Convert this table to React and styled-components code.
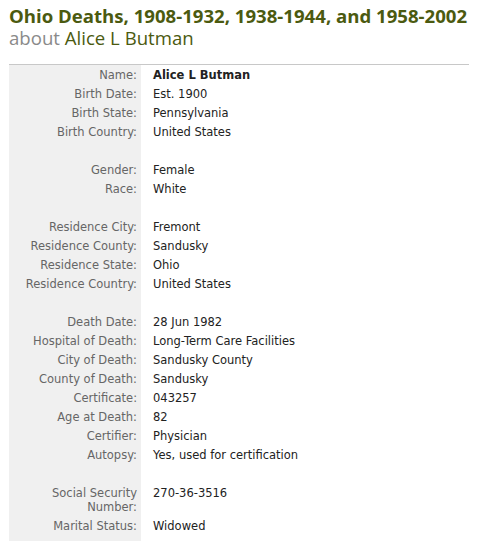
import React from 'react'
import styled, { createGlobalStyle } from 'styled-components'

const GlobalStyle = createGlobalStyle`
    html, body {
        margin: 0;
        background: #fff;
    }
`

const Page = styled.div`
    padding: 4px 8px 0 9px;
    width: 460px;
    font-family: "DejaVu Sans", Verdana, sans-serif;
`

const Title = styled.h1`
    margin: 0;
    font-family: "Open Sans", sans-serif;
    font-size: 18.6px;
    font-weight: 700;
    line-height: 23px;
    color: #4b5a10;
    white-space: nowrap;
`

const Subtitle = styled.h2`
    margin: 0 0 15px;
    font-family: "Open Sans", sans-serif;
    font-size: 18.6px;
    font-weight: 400;
    line-height: 22px;
    color: #4b5a10;

    span {
        color: #8a8a8a;
    }
`

const Table = styled.table`
    width: 460px;
    border-collapse: collapse;
    border-top: 1px solid #c8c8c8;
    font-size: 11.5px;
`

const Label = styled.td`
    width: 128px;
    padding: 2.5px 4px 2.5px 0;
    background: #f0f0f0;
    color: #666;
    text-align: right;
    vertical-align: top;
    line-height: 14px;
    white-space: ${props => props.wrap ? 'normal' : 'nowrap'};
`

const Value = styled.td`
    padding: 2.5px 0 2.5px 12px;
    color: #222;
    vertical-align: top;
    line-height: 14px;
    font-weight: ${props => props.bold ? 700 : 400};
`

const Filler = styled.td`
    height: ${props => props.h}px;
    background: ${props => props.grey ? '#f0f0f0' : 'transparent'};
    padding: 0;
`

const groups = [
    [
        ['Name:', 'Alice L Butman', true],
        ['Birth Date:', 'Est. 1900'],
        ['Birth State:', 'Pennsylvania'],
        ['Birth Country:', 'United States'],
    ],
    [
        ['Gender:', 'Female'],
        ['Race:', 'White'],
    ],
    [
        ['Residence City:', 'Fremont'],
        ['Residence County:', 'Sandusky'],
        ['Residence State:', 'Ohio'],
        ['Residence Country:', 'United States'],
    ],
    [
        ['Death Date:', '28 Jun 1982'],
        ['Hospital of Death:', 'Long-Term Care Facilities'],
        ['City of Death:', 'Sandusky County'],
        ['County of Death:', 'Sandusky'],
        ['Certificate:', '043257'],
        ['Age at Death:', '82'],
        ['Certifier:', 'Physician'],
        ['Autopsy:', 'Yes, used for certification'],
    ],
    [
        ['Social Security Number:', '270-36-3516'],
        ['Marital Status:', 'Widowed'],
    ],
]

export default function App() {
    return (
        <>
            <GlobalStyle />
            <Page>
                <Title>Ohio Deaths, 1908-1932, 1938-1944, and 1958-2002</Title>
                <Subtitle><span>about</span> Alice L Butman</Subtitle>
                <Table>
                    <tbody>
                        {groups.map((group, gi) => (
                            <React.Fragment key={gi}>
                                {gi > 0 && (
                                    <tr>
                                        <Filler grey h={19} />
                                        <Filler h={19} />
                                    </tr>
                                )}
                                {group.map(([label, value, bold]) => (
                                    <tr key={label}>
                                        <Label wrap={label.length > 20}>{label}</Label>
                                        <Value bold={bold}>{value}</Value>
                                    </tr>
                                ))}
                            </React.Fragment>
                        ))}
                        <tr>
                            <Filler grey h={20} />
                            <Filler h={20} />
                        </tr>
                    </tbody>
                </Table>
            </Page>
        </>
    )
}
